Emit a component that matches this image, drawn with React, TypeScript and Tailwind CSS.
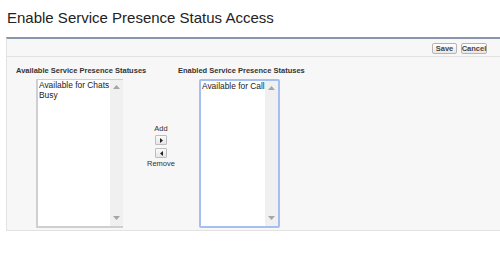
import React from "react";

const FONT = { fontFamily: '"Liberation Sans", Arial, sans-serif' };

function ScrollArrow({ up }: { up: boolean }) {
  return (
    <svg width="7" height="4" viewBox="0 0 7 4" className="block">
      <path d={up ? "M0 4 L3.5 0 L7 4 Z" : "M0 0 L3.5 4 L7 0 Z"} fill="#a6a6a6" />
    </svg>
  );
}

function ListBox({ items, focused }: { items: string[]; focused?: boolean }) {
  return (
    <div
      className={
        "flex h-[149px] bg-white " +
        (focused
          ? "w-[81px] border-2 border-solid border-[#a4bff0] rounded-[2px]"
          : "w-[87px] border-l-2 border-b-2 border-t border-[#cfcfcf]")
      }
    >
      <div className="flex-1 pl-px pt-[1px] text-[8.4px] leading-[9.5px] text-[#222]">
        {items.map((it) => (
          <div key={it} className="whitespace-nowrap">
            {it}
          </div>
        ))}
      </div>
      <div className="flex w-[13px] flex-col items-center justify-between bg-[#f0f0f0] pt-[5px] pb-[6px]">
        <ScrollArrow up />
        <ScrollArrow up={false} />
      </div>
    </div>
  );
}

function MoveButton({ dir }: { dir: "right" | "left" }) {
  return (
    <div className="flex h-[10px] w-[12px] items-center justify-center rounded-[1px] border border-[#bdbdbd] bg-gradient-to-b from-[#fbfbfb] to-[#e6e6e6]">
      <svg width="3" height="5" viewBox="0 0 3 5" className="block">
        <path d={dir === "right" ? "M0 0 L3 2.5 L0 5 Z" : "M3 0 L0 2.5 L3 5 Z"} fill="#222" />
      </svg>
    </div>
  );
}

function SmallButton({ label, w }: { label: string; w: string }) {
  return (
    <div
      className={
        "flex h-[11px] items-center justify-center rounded-[2px] border border-[#b5b5b5] bg-gradient-to-b from-white to-[#e8e8e8] text-[7.5px] font-bold text-[#444] " +
        w
      }
    >
      {label}
    </div>
  );
}

export default function App() {
  return (
    <div className="h-[265px] w-[500px] overflow-hidden bg-white" style={FONT}>
      <div className="flex h-[37px] items-center pl-[7px] text-[15px] text-[#222]">
        Enable Service Presence Status Access
      </div>

      <div className="ml-[6px] h-[194px] border-t-2 border-l border-b border-[#8996ab] border-l-[#e2e2e2] border-b-[#e2e2e2] bg-[#f7f7f7]">
        {/* button row */}
        <div className="flex h-[18px] justify-end gap-[4px] border-b border-[#e3e3e3] pt-[4px] pr-[13px]">
          <SmallButton label="Save" w="w-[25px]" />
          <SmallButton label="Cancel" w="w-[26px]" />
        </div>

        {/* labels */}
        <div className="flex pt-[9px] pl-[9px] text-[7.5px] font-bold leading-[9px] text-[#333]">
          <div className="w-[162px] whitespace-nowrap">Available Service Presence Statuses</div>
          <div className="whitespace-nowrap">Enabled Service Presence Statuses</div>
        </div>

        {/* listboxes */}
        <div className="flex pt-[4px] pl-[29px]">
          <ListBox items={["Available for Chats", "Busy"]} />
          <div className="flex w-[76px] flex-col items-center pt-[46px] text-[7.5px] leading-[8px] text-[#333]">
            <div className="mb-[2px]">Add</div>
            <MoveButton dir="right" />
            <div className="h-[3px]" />
            <MoveButton dir="left" />
            <div className="mt-[2px]">Remove</div>
          </div>
          <ListBox items={["Available for Call"]} focused />
        </div>
      </div>
    </div>
  );
}
